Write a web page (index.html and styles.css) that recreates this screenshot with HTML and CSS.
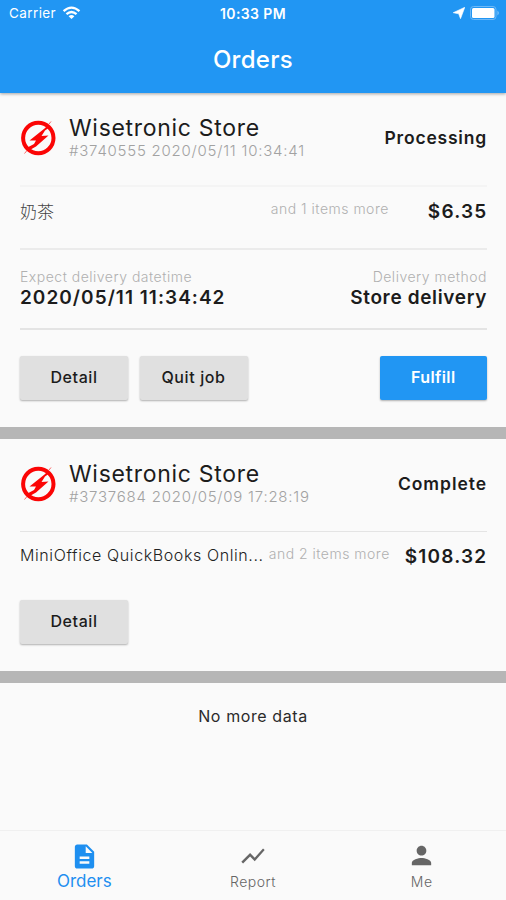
FILE: index.html
```html
<!DOCTYPE html>
<html lang="en">
<head>
<meta charset="utf-8">
<title>Orders</title>
<link rel="stylesheet" href="styles.css">
</head>
<body>
<svg class="defs" width="0" height="0" aria-hidden="true">
  <symbol id="logo" viewBox="0 0 36 36">
    <circle cx="18.300" cy="18" r="15.200" fill="none" stroke="#fb0505" stroke-width="4"/>
    <path d="M4.500 33.500 L7 30.500 M29 4 L31 1.500" stroke="#fb0505" stroke-width="1" fill="none" opacity=".6"/>
    <path d="M24.500 8.500 L9.500 20.500 L16 20.500 L14 24 L5.500 28.500 L8 31 L16 26.500 L28.500 15.500 L21.500 16 L25 10.500 L30 7 L28 5 Z" fill="#fb0505"/>
  </symbol>
</svg>
<div class="app">
  <header class="header">
    <div class="status">
      <div class="status-left"><span class="carrier">Carrier</span>
        <svg width="19" height="14" viewBox="0 0 20 15"><g fill="none" stroke="#fff" stroke-width="2.500"><path d="M1.500 5.500 Q10 -2 18.500 5.500"/><path d="M4.600 8.700 Q10 4 15.400 8.700"/></g><path d="M6.900 10.900 Q10 8.500 13.100 10.900 L10 14 Z" fill="#fff"/></svg>
      </div>
      <span class="clock">10:33 PM</span>
      <div class="status-right">
        <svg width="12" height="12" viewBox="0 0 12 12"><path d="M11.800 .3 L7.500 11.700 L5.700 6.800 L.2 5.700 Z" fill="#fff" stroke="#fff" stroke-width=".6"/></svg>
        <svg width="30" height="14" viewBox="0 0 30 14"><rect x=".5" y=".5" width="25.500" height="13" rx="3" fill="none" stroke="#6db8f7"/><rect x="2" y="2" width="22.500" height="10" rx="1.500" fill="#fff"/><path d="M27.500 4.500 Q30 7 27.500 9.500Z" fill="#8bc8fb"/></svg>
      </div>
    </div>
    <h1 class="title">Orders</h1>
  </header>
  <main class="list">
    <section class="order">
      <div class="order-head">
        <svg class="logo" width="36" height="36"><use href="#logo"/></svg>
        <div class="store"><div class="store-name">Wisetronic Store</div><div class="store-meta">#3740555 2020/05/11 10:34:41</div></div>
        <div class="state">Processing</div>
      </div>
      <div class="items faint">
        <span class="item cjk">奶茶</span><span class="more">and 1 items more</span><span class="price price-a">$6.35</span>
      </div>
      <div class="delivery">
        <div><div class="label">Expect delivery datetime</div><div class="value date">2020/05/11 11:34:42</div></div>
        <div class="right"><div class="label">Delivery method</div><div class="value">Store delivery</div></div>
      </div>
      <div class="actions">
        <button class="btn">Detail</button>
        <button class="btn">Quit job</button>
        <button class="btn primary">Fulfill</button>
      </div>
    </section>
    <section class="order">
      <div class="order-head">
        <svg class="logo" width="36" height="36"><use href="#logo"/></svg>
        <div class="store"><div class="store-name">Wisetronic Store</div><div class="store-meta">#3737684 2020/05/09 17:28:19</div></div>
        <div class="state complete">Complete</div>
      </div>
      <div class="items">
        <span class="item">MiniOffice QuickBooks Onlin...</span><span class="more">and 2 items more</span><span class="price price-b">$108.32</span>
      </div>
      <div class="actions second">
        <button class="btn">Detail</button>
      </div>
    </section>
    <p class="end">No more data</p>
  </main>
  <nav class="nav">
    <a class="tab active"><svg width="29" height="29" viewBox="0 0 24 24"><path fill="currentColor" d="M14 2H6c-1.100 0-1.990.9-1.990 2L4 20c0 1.100.89 2 1.990 2H18c1.100 0 2-.9 2-2V8l-6-6zm2 16H8v-2h8v2zm0-4H8v-2h8v2zm-3-5V3.500L18.500 9H13z"/></svg><span>Orders</span></a>
    <a class="tab"><svg width="28" height="28" viewBox="0 0 24 24"><path fill="currentColor" d="M3.500 18.490l6-6.010 4 4L22 6.920l-1.410-1.410-7.090 7.970-4-4L2 16.990z"/></svg><span>Report</span></a>
    <a class="tab"><svg width="29" height="29" viewBox="0 0 24 24"><path fill="currentColor" d="M12 12c2.210 0 4-1.790 4-4s-1.790-4-4-4-4 1.790-4 4 1.790 4 4 4zm0 2c-2.670 0-8 1.340-8 4v2h16v-2c0-2.660-5.330-4-8-4z"/></svg><span>Me</span></a>
  </nav>
</div>
</body>
</html>
```
FILE: styles.css
```css
* { box-sizing: border-box; }
body { margin: 0; background: #fafafa; color: #1c1c1c; font-family: Inter, "Noto Sans CJK SC", sans-serif; }
.defs { position: absolute; }
.app { width: 506px; height: 900px; display: flex; flex-direction: column; overflow: hidden; }
.header { height: 93px; flex: none; background: #2196f3; color: #fff; box-shadow: 0 1px 3px rgba(0,0,0,.35); }
.status { height: 26px; display: grid; grid-template-columns: 1fr auto 1fr; align-items: center; padding: 0 6px 0 9px; font-size: 13.5px; }
.status-left { display: flex; align-items: center; gap: 6px; }
.status-left svg { margin-top: -1px; }
.carrier { letter-spacing: .4px; }
.clock { font-size: 14px; font-weight: 600; letter-spacing: .4px; margin-left: -3px; }
.status-right { display: flex; align-items: center; justify-content: flex-end; gap: 5px; }
.title { margin: 0; font-size: 24px; line-height: 30px; padding-top: 19px; font-weight: 500; letter-spacing: .3px; text-align: center; }
.list { flex: 1; }
.order { padding: 0 19px 0 20px; border-bottom: 12px solid #b6b6b6; }
.order-head { height: 92px; display: flex; align-items: center; padding-bottom: 3px; }
.logo { flex: none; }
.store { margin-left: 13px; flex: 1; white-space: nowrap; }
.store-name { font-size: 23px; line-height: 26px; letter-spacing: .7px; padding-top: 1px; }
.store-meta { font-size: 15px; line-height: 20px; color: #a2a2a2; font-weight: 300; letter-spacing: .76px; }
.state { font-size: 17.5px; font-weight: 600; letter-spacing: .8px; padding-bottom: 1px; }
.state.complete { letter-spacing: .95px; }
.items { height: 63px; border-top: 1px solid #e4e4e4; display: flex; align-items: center; padding-bottom: 12px; white-space: nowrap; }
.items.faint { border-top: 2px solid #f4f4f4; }
.item { font-size: 16px; font-weight: 300; letter-spacing: .6px; color: #222; padding-bottom: 4px; }
.item.cjk { font-size: 17px; letter-spacing: 0; color: #444; padding-bottom: 3px; }
.more { margin-left: auto; font-size: 14px; font-weight: 300; letter-spacing: .5px; color: #b0b0b0; padding-bottom: 7px; }
.price { font-size: 19px; font-weight: 600; letter-spacing: 1.2px; margin-right: -.4px; padding-bottom: 1px; }
.price-a { margin-left: 39px; }
.price-b { margin-left: 15px; }
.delivery { height: 82px; border-top: 2px solid #ebebeb; border-bottom: 2px solid #e4e4e4; display: flex; justify-content: space-between; padding-top: 18px; white-space: nowrap; }
.right { text-align: right; }
.label { font-size: 14px; line-height: 18px; font-weight: 300; color: #b0b0b0; letter-spacing: .5px; }
.value { font-size: 19px; line-height: 23px; font-weight: 600; letter-spacing: .65px; }
.value.date { letter-spacing: 1.03px; }
.actions { height: 97px; display: flex; gap: 11.500px; align-items: flex-start; padding-top: 26px; }
.actions.second { height: 77px; padding-top: 6px; }
.btn { font: 500 16px/43px Inter, sans-serif; letter-spacing: .6px; width: 108px; height: 44px; padding: 0 0 1px; border: 0; border-radius: 2px; color: #1c1c1c; background: #e0e0e0; box-shadow: 0 1px 2px rgba(0,0,0,.3); }
.primary { margin-left: auto; width: 107.5px; background: #2196f3; color: #fff; font-weight: 600; letter-spacing: .4px; }
.end { margin: 0; text-align: center; font-size: 16px; line-height: 20px; padding-top: 23px; letter-spacing: .6px; color: #2a2a2a; }
.nav { height: 70px; flex: none; border-top: 1px solid #f0f0f0; display: grid; grid-template-columns: repeat(3, 1fr); }
.tab { display: flex; flex-direction: column; align-items: center; justify-content: flex-end; padding-bottom: 8px; font-size: 14px; font-weight: 300; letter-spacing: .5px; color: #666; line-height: 20px; }
.tab svg { margin-bottom: 2px; }
.tab.active { color: #1e8ff0; font-size: 17px; font-weight: 400; letter-spacing: 0; padding-bottom: 9px; }
.tab.active svg { margin-bottom: 0; }
```
